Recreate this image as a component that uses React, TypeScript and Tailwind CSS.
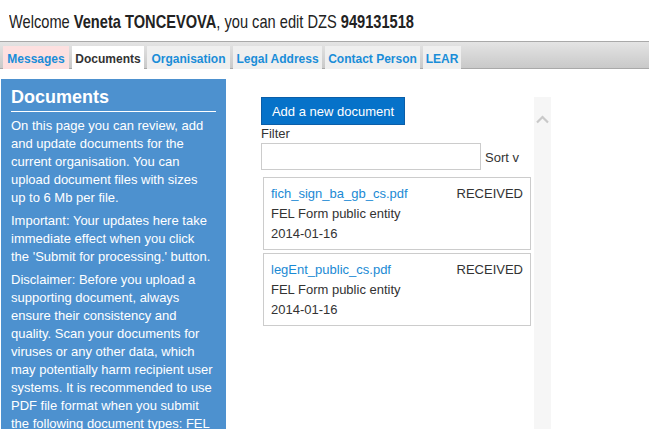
const tabs = [
  { label: 'Messages', w: 'w-[66px]', tone: 'bg-[#fde0e0] text-[#1a8dd8]' },
  { label: 'Documents', w: 'w-[72px]', tone: 'bg-white text-[#333]' },
  { label: 'Organisation', w: 'w-[83px]', tone: 'bg-[#efefef] text-[#1a8dd8]' },
  { label: 'Legal Address', w: 'w-[89px]', tone: 'bg-[#efefef] text-[#1a8dd8]' },
  { label: 'Contact Person', w: 'w-[95px]', tone: 'bg-[#efefef] text-[#1a8dd8]' },
  { label: 'LEAR', w: 'w-[38px]', tone: 'bg-[#efefef] text-[#1a8dd8]' },
]

const documents = [
  { file: 'fich_sign_ba_gb_cs.pdf', status: 'RECEIVED', kind: 'FEL Form public entity', date: '2014-01-16' },
  { file: 'legEnt_public_cs.pdf', status: 'RECEIVED', kind: 'FEL Form public entity', date: '2014-01-16' },
]

function DocumentCard({ doc }: { doc: (typeof documents)[number] }) {
  return (
    <div className="border border-[#ccc] bg-white px-[7px] pt-[6px] pb-[5px] text-[13px] leading-[20px] text-[#333]">
      <div className="flex justify-between">
        <a className="text-[#1a8ad4]">{doc.file}</a>
        <span>{doc.status}</span>
      </div>
      <div>{doc.kind}</div>
      <div>{doc.date}</div>
    </div>
  )
}

export default function App() {
  return (
    <div className="h-[429px] overflow-hidden bg-white font-['Liberation_Sans',Arial,sans-serif] text-[#222]">
      {/* heading uses a narrow face in the original; squeeze the regular one */}
      <h1 className="h-[41px] whitespace-nowrap pl-[9px] pt-[11px] text-[19px] leading-[22px]">
        <span className="inline-block origin-left scale-x-[0.77]">
          Welcome <b>Veneta TONCEVOVA</b>, you can edit DZS <b>949131518</b>
        </span>
      </h1>

      <nav className="flex h-[28px] gap-[3px] border-y border-[#a9a9a9] bg-gradient-to-b from-[#e4e4e4] to-[#c9c9c9] pl-[3px] pt-[4px]">
        {tabs.map(tab => (
          <a
            key={tab.label}
            className={`${tab.w} ${tab.tone} h-[23px] shrink-0 pt-[3px] text-center text-[12px] font-bold leading-[20px]`}
          >
            {tab.label}
          </a>
        ))}
      </nav>

      <div className="flex pl-[1px] pt-[10px]">
        <aside className="w-[225px] shrink-0 bg-[#4d91cf] px-[10px] pt-[8px] pb-4 text-white">
          <h2 className="border-b border-white pb-[3px] text-[18px] font-bold leading-[21px]">Documents</h2>
          <p className="mt-[5px] pr-[2px] text-[13px] leading-[18px]">
            On this page you can review, add and update documents for the current organisation. You can upload
            document files with sizes up to 6 Mb per file.
          </p>
          <p className="mt-[5px] pr-[2px] text-[13px] leading-[18px]">
            Important: Your updates here take immediate effect when you click the 'Submit for processing.' button.
          </p>
          <p className="mt-[5px] pr-[2px] text-[13px] leading-[18px]">
            Disclaimer: Before you upload a supporting document, always ensure their consistency and quality. Scan
            your documents for viruses or any other data, which may potentially harm recipient user systems. It is
            recommended to use PDF file format when you submit the following document types: FEL Form, Legal Entity
            form, Financial Identification form.
          </p>
        </aside>

        <main className="ml-[35px] flex">
          <div className="mt-[18px] w-[273px]">
            <button className="h-[28px] w-[144px] border border-[#0b5ea8] bg-[#0672c9] text-[13px] leading-[15px] text-white">
              Add a new document
            </button>
            <div className="text-[13px] leading-[17px] text-[#333]">Filter</div>
            <div className="mt-[1px] flex items-center">
              <input className="h-[27px] w-[220px] border border-[#ccc] bg-white px-1 text-[13px] outline-none" />
              <span className="ml-[4px] pt-[2px] text-[13px] leading-[15px] text-[#333]">Sort v</span>
            </div>
            <div className="mt-[7px] ml-[2px] flex w-[268px] flex-col gap-[3px]">
              {documents.map(doc => (
                <DocumentCard key={doc.file} doc={doc} />
              ))}
            </div>
          </div>

          <div className="mt-[18px] h-[340px] w-[17px] bg-[#f6f6f6] pt-[18px]">
            <svg width="17" height="9" viewBox="0 0 17 9" className="block">
              <polyline points="3,7.5 8.5,2 14,7.5" fill="none" stroke="#c9c9c9" strokeWidth="2.2" />
            </svg>
          </div>
        </main>
      </div>
    </div>
  )
}
